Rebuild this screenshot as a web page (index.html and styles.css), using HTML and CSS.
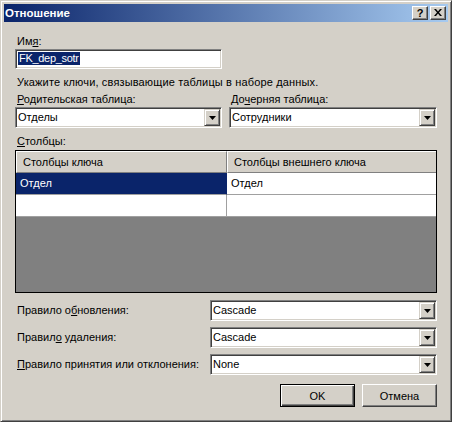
FILE: index.html
```html
<!DOCTYPE html>
<html lang="ru">
<head>
<meta charset="utf-8">
<title>Отношение</title>
<link rel="stylesheet" href="styles.css">
</head>
<body>
<div class="window">
  <div class="titlebar">
    <span class="title">Отношение</span>
    <div class="tbtns">
      <span class="tbtn help">?</span>
      <span class="tbtn close"><svg width="8" height="7" viewBox="0 0 8 7"><path d="M0 0h2l2 2.5L6 0h2L5 3.5 8 7H6L4 4.5 2 7H0l3-3.5z" fill="#000"/></svg></span>
    </div>
  </div>
  <div class="content">
    <div class="label">Им<u>я</u>:</div>
    <div class="textbox"><span class="sel">FK_dep_sotr</span></div>
    <div class="label hint">Укажите ключи, связывающие таблицы в наборе данных.</div>
    <div class="pair">
      <div class="col left">
        <div class="label"><u>Р</u>одительская таблица:</div>
        <div class="combo"><span class="val">Отделы</span><span class="drop"><svg width="7" height="4" viewBox="0 0 7 4"><path d="M0 0h7L3.5 4z" fill="#000"/></svg></span></div>
      </div>
      <div class="col right">
        <div class="label">До<u>ч</u>ерняя таблица:</div>
        <div class="combo"><span class="val">Сотрудники</span><span class="drop"><svg width="7" height="4" viewBox="0 0 7 4"><path d="M0 0h7L3.5 4z" fill="#000"/></svg></span></div>
      </div>
    </div>
    <div class="label cols-label"><u>С</u>толбцы:</div>
    <div class="grid">
      <div class="grow ghead">
        <div class="hc">Столбцы ключа</div>
        <div class="hc">Столбцы внешнего ключа</div>
      </div>
      <div class="grow">
        <div class="cell c1 selected">Отдел</div>
        <div class="cell c2">Отдел</div>
      </div>
      <div class="grow">
        <div class="cell c1"></div>
        <div class="cell c2"></div>
      </div>
    </div>
    <div class="rules">
      <div class="rule">
        <span class="rlabel">Правило о<u>б</u>новления:</span>
        <div class="combo wide"><span class="val">Cascade</span><span class="drop"><svg width="7" height="4" viewBox="0 0 7 4"><path d="M0 0h7L3.5 4z" fill="#000"/></svg></span></div>
      </div>
      <div class="rule">
        <span class="rlabel">Правил<u>о</u> удаления:</span>
        <div class="combo wide"><span class="val">Cascade</span><span class="drop"><svg width="7" height="4" viewBox="0 0 7 4"><path d="M0 0h7L3.5 4z" fill="#000"/></svg></span></div>
      </div>
      <div class="rule">
        <span class="rlabel"><u>П</u>равило принятия или отклонения:</span>
        <div class="combo wide"><span class="val">None</span><span class="drop"><svg width="7" height="4" viewBox="0 0 7 4"><path d="M0 0h7L3.5 4z" fill="#000"/></svg></span></div>
      </div>
    </div>
    <div class="buttons">
      <button class="btn default">OK</button>
      <button class="btn">Отмена</button>
    </div>
  </div>
</div>
</body>
</html>
```

FILE: styles.css
```css
html, body {
  margin: 0;
  padding: 0;
  background: #d4d0c8;
}
body {
  font-family: "Liberation Sans", Arial, sans-serif;
  font-size: 11px;
  color: #000;
}
.window {
  width: 452px;
  height: 422px;
  box-sizing: border-box;
  background: #d4d0c8;
  border: 1px solid;
  border-color: #d4d0c8 #404040 #404040 #d4d0c8;
  box-shadow: inset 1px 1px #fff, inset -1px -1px #808080;
  padding: 3px;
  display: flex;
  flex-direction: column;
}
.titlebar {
  height: 18px;
  flex: none;
  display: flex;
  align-items: center;
  background: linear-gradient(to right, #0a246a, #a6caf0);
  padding: 0 2px 0 1px;
}
.title {
  color: #fff;
  font-weight: bold;
  font-size: 11.5px;
}
.tbtns {
  margin-left: auto;
  display: flex;
  gap: 2px;
}
.tbtn {
  width: 16px;
  height: 14px;
  box-sizing: border-box;
  background: #d4d0c8;
  border: 1px solid;
  border-color: #fff #404040 #404040 #fff;
  box-shadow: inset -1px -1px #808080;
  display: flex;
  align-items: center;
  justify-content: center;
}
.help {
  font-weight: bold;
  font-size: 11px;
  line-height: 12px;
  padding-bottom: 1px;
}
.close svg { display: block; margin-top: -1px; }

.content {
  padding: 13px 11px 0 11px;
  display: flex;
  flex-direction: column;
}
.label {
  line-height: 13px;
  padding-left: 2px;
  white-space: nowrap;
}
.hint { letter-spacing: 0.15px; }
u { text-decoration: underline; text-underline-offset: 1px; }

.textbox {
  width: 207px;
  height: 20px;
  box-sizing: border-box;
  margin-top: 1px;
  background: #fff;
  border: 1px solid;
  border-color: #808080 #fff #fff #808080;
  box-shadow: inset 1px 1px #404040, inset -1px -1px #d4d0c8;
  padding: 2px 2px 0 2px;
  display: flex;
  align-items: flex-start;
}
.sel {
  background: #0a246a;
  color: #fff;
  line-height: 13px;
  padding: 0 1px;
  font-size: 11px;
  letter-spacing: -0.3px;
}
.hint { margin-top: 7px; }
.pair {
  margin-top: 4px;
  display: flex;
  gap: 7px;
}
.col.left { width: 207px; }
.col.right { flex: 1; }

.combo {
  height: 21px;
  box-sizing: border-box;
  margin-top: 1px;
  background: #fff;
  border: 1px solid;
  border-color: #808080 #fff #fff #808080;
  box-shadow: inset 1px 1px #404040, inset -1px -1px #d4d0c8;
  padding: 1px 1px 1px 2px;
  display: flex;
  align-items: stretch;
}
.combo .val {
  flex: 1;
  line-height: 17px;
  white-space: nowrap;
}
.drop {
  width: 16px;
  box-sizing: border-box;
  background: #d4d0c8;
  border: 1px solid;
  border-color: #d4d0c8 #404040 #404040 #d4d0c8;
  box-shadow: inset 1px 1px #fff, inset -1px -1px #808080;
  display: flex;
  align-items: center;
  justify-content: center;
}
.drop svg { display: block; }

.cols-label { margin-top: 7px; }
.grid {
  margin-top: 2px;
  height: 143px;
  box-sizing: border-box;
  border: 1px solid #000;
  background: #808080;
  display: flex;
  flex-direction: column;
}
.grow {
  display: grid;
  grid-template-columns: 211px 1fr;
}
.ghead .hc {
  height: 22px;
  box-sizing: border-box;
  background: #d4d0c8;
  border-top: 1px solid #fff;
  border-left: 1px solid #fff;
  border-right: 1px solid #808080;
  border-bottom: 1px solid #808080;
  padding-left: 6px;
  line-height: 21px;
  white-space: nowrap;
}
.ghead .hc:last-child { border-right: none; }
.cell {
  height: 22px;
  box-sizing: border-box;
  background: #fff;
  border-bottom: 1px solid #a0a0a0;
  padding-left: 4px;
  line-height: 21px;
}
.cell.c1 { border-right: 1px solid #a0a0a0; }
.cell.selected {
  background: #0a246a;
  color: #fff;
  border-right-color: #0a246a;
}

.rules {
  margin-top: 7px;
  display: flex;
  flex-direction: column;
  gap: 6px;
}
.rule {
  display: flex;
  align-items: center;
}
.rlabel {
  width: 195px;
  padding-left: 2px;
  box-sizing: border-box;
  white-space: nowrap;
  line-height: 13px;
}
.combo.wide {
  flex: 1;
  margin-top: 0;
}

.buttons {
  margin-top: 9px;
  display: flex;
  justify-content: flex-end;
  gap: 7px;
}
.btn {
  width: 75px;
  height: 23px;
  box-sizing: border-box;
  font-family: inherit;
  font-size: 11px;
  color: #000;
  background: #d4d0c8;
  border: 1px solid;
  border-color: #fff #404040 #404040 #fff;
  box-shadow: inset -1px -1px #808080;
  padding: 0;
  margin: 0;
}
.btn.default {
  border: 1px solid #000;
  box-shadow: inset 1px 1px #fff, inset -1px -1px #404040, inset -2px -2px #808080;
}
```
